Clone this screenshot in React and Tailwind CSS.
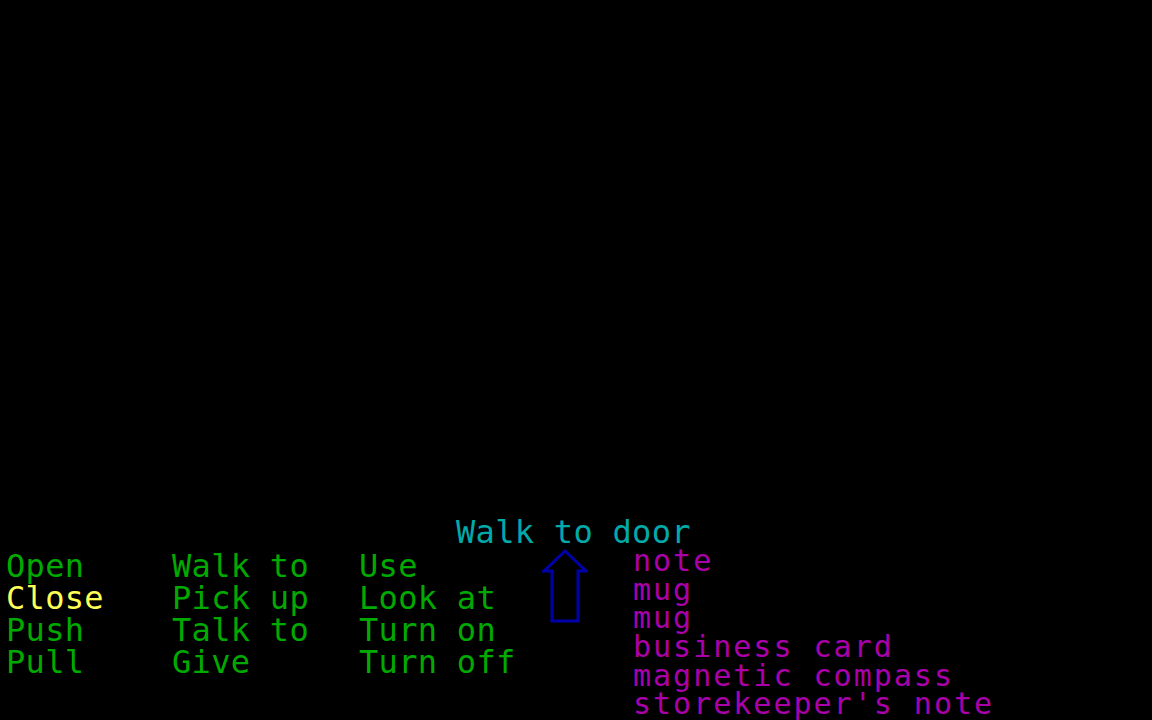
export default function App() {
  const verbs = [
    ["Open", "Walk to", "Use"],
    ["Close", "Pick up", "Look at"],
    ["Push", "Talk to", "Turn on"],
    ["Pull", "Give", "Turn off"],
  ];
  const inventory = ["note", "mug", "mug", "business card", "magnetic compass", "storekeeper's note"];
  return (
    <div className="w-[1152px] h-[720px] bg-black overflow-hidden flex flex-col [font-family:'DejaVu_Sans_Mono',monospace] whitespace-pre">
      <div className="h-[516px] shrink-0" />
      <div className="h-[29px] shrink-0 pl-[456px] text-[32px] leading-[32px] tracking-[0.3px] text-[#00aaaa]">Walk to door</div>
      <div className="flex items-start">
        <div className="pt-[5px] pl-[6px] grid grid-cols-[166px_187px_183px] text-[32px] leading-[32px] tracking-[0.3px]">
          {verbs.map((row, i) =>
            row.map((v, j) => (
              <div key={i + "-" + j} className={v === "Close" ? "text-[#ffff55]" : "text-[#00aa00]"}>
                {v}
              </div>
            ))
          )}
        </div>
        <svg width="46" height="76" viewBox="0 0 46 76" className="mt-[3px] shrink-0">
          <polygon
            points="23,3 44,23 36,23 36,73 10,73 10,23 2,23"
            fill="none"
            stroke="#0000aa"
            strokeWidth="3"
            strokeLinejoin="miter"
          />
        </svg>
        <div className="ml-[45px] pt-[2px] flex flex-col text-[30px] leading-[28.7px] tracking-[2px] text-[#aa00aa]">
          {inventory.map((it, i) => (
            <div key={i} className="h-[28.7px]">{it}</div>
          ))}
        </div>
      </div>
    </div>
  );
}
